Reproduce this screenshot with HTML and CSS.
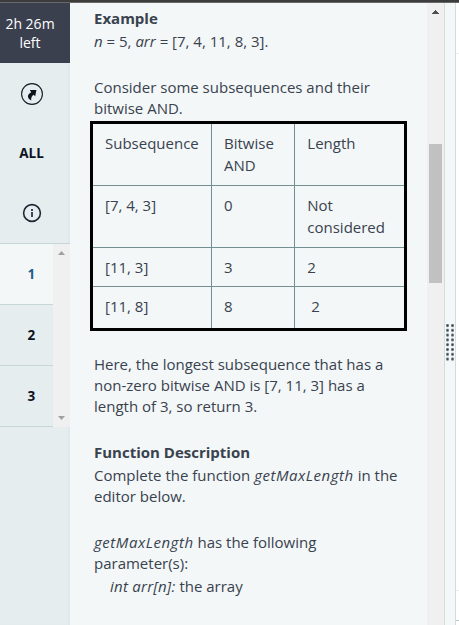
FILE: index.html
```html
<!DOCTYPE html>
<html lang="en">
<head>
<meta charset="utf-8">
<title>Question</title>
<link rel="stylesheet" href="styles.css">
</head>
<body>
<div class="topbar"></div>
<div class="app">
  <nav class="sidebar">
    <div class="timer"><span>2h 26m</span><span>left</span></div>
    <div class="tools">
      <div class="tool share">
        <svg width="24" height="24" viewBox="0 0 24 24"><circle cx="12" cy="12" r="10.4" fill="none" stroke="#151b27" stroke-width="1.1"/><path d="M9.8 8H16.4L15.2 14.2L13.6 12.8C11.8 14 11 15.6 11.2 18.4C7 16.4 6.8 12.4 11.2 10.2Z" fill="#0e141e"/></svg>
      </div>
      <div class="tool all">ALL</div>
      <div class="tool">
        <svg width="20" height="20" viewBox="0 0 20 20"><circle cx="10" cy="10" r="8.4" fill="none" stroke="#202633" stroke-width="1.6"/><path d="M9 6h2v2H9zM9 9h2v5H9z" fill="#414855"/></svg>
      </div>
    </div>
    <div class="questions">
      <div class="list">
        <div class="item active">1</div>
        <div class="item">2</div>
        <div class="item">3</div>
      </div>
      <div class="mini-scroll">
        <svg width="7" height="4" viewBox="0 0 7 4"><path d="M3.5 0L7 4H0z" fill="#a0a0a0"/></svg>
        <svg width="7" height="4" viewBox="0 0 7 4"><path d="M3.5 4L7 0H0z" fill="#a0a0a0"/></svg>
      </div>
    </div>
  </nav>
  <main class="content">
    <h2>Example</h2>
    <p class="gap"><i>n</i> = 5, <i>arr</i> = [7, 4, 11, 8, 3].</p>
    <p>Consider some subsequences and their<br>bitwise AND.</p>
    <div class="table">
      <div>Subsequence</div><div>Bitwise<br>AND</div><div>Length</div>
      <div>[7, 4, 3]</div><div>0</div><div>Not<br>considered</div>
      <div>[11, 3]</div><div>3</div><div>2</div>
      <div>[11, 8]</div><div>8</div><div>&nbsp;2</div>
    </div>
    <p class="gap">Here, the longest subsequence that has a<br>non-zero bitwise AND is [7, 11, 3] has a<br>length of 3, so return 3.</p>
    <h2>Function Description</h2>
    <p class="gap">Complete the function <i class="fn">getMaxLength</i> in the<br>editor below.</p>
    <p><i class="fn">getMaxLength</i> has the following<br>parameter(s):</p>
    <p class="param"><i>int arr[n]:</i> the array</p>
  </main>
  <div class="scrollbar">
    <svg width="7" height="4" viewBox="0 0 7 4" shape-rendering="crispEdges"><path d="M3 0h1v1h1v1h1v1h1v1H0V3h1V2h1V1h1z" fill="#505050"/></svg>
    <div class="thumb"></div>
  </div>
  <div class="splitter"><div class="grip"></div></div>
  <div class="editor"><div class="editor-head"></div><div class="editor-body"></div><div class="editor-foot"></div></div>
</div>
</body>
</html>
```
FILE: styles.css
```css
* { box-sizing: border-box; }
body {
  margin: 0;
  height: 625px;
  overflow: hidden;
  font-family: "Open Sans", sans-serif;
  font-size: 15px;
  line-height: 21px;
  color: #39424e;
  background: #f3f7f8;
}
.topbar { height: 3px; background: #3c3c3c; border-bottom: 1px solid #686868; }
.app { display: flex; height: 622px; }
.sidebar { width: 70px; flex: none; background: #e5edef; box-shadow: inset -2px 0 2px -1px #dce5e7; }
.timer {
  height: 60px;
  padding: 11px 10px 0 0;
  display: flex;
  flex-direction: column;
  align-items: center;
  font-size: 14px;
  line-height: 19px;
  color: #fff;
  background: #3b404e;
}
.tools { height: 181px; padding-right: 6px; border-bottom: 1px solid #c7d6d9; }
.tool { height: 60px; display: flex; align-items: center; justify-content: center; }
.share { padding-top: 2px; }
.all { font-size: 13.5px; font-weight: 700; color: #0e141e; padding-right: 1px; }
.questions { display: flex; height: 183px; }
.list { width: 53px; }
.item {
  height: 61px;
  padding: 20px 0 0 27.5px;
  font-size: 13.5px;
  font-weight: 700;
  color: #0e141e;
  border-bottom: 1px solid #c7d6d9;
}
.active { background: #f3f7f8; color: #1f5f8c; }
.mini-scroll {
  width: 17px;
  padding: 7px 0;
  display: flex;
  flex-direction: column;
  justify-content: space-between;
  align-items: center;
  background: #f0f0f0;
}
.content { width: 357px; flex: none; padding: 5px 0 0 24px; white-space: nowrap; }
h2 { margin: 0 0 2px; font-size: 15px; line-height: 21px; font-weight: 700; }
p { margin: 0; }
.gap { margin-bottom: 25px; }
.fn { letter-spacing: 0.54px; }
.param { margin-top: 2px; padding-left: 16px; }
.param i { letter-spacing: 0.25px; }
.table {
  display: grid;
  grid-template-columns: 119px 83px 109px;
  grid-template-rows: 62px 62px 39px 41px;
  width: 317px;
  margin: 2px 0 23px -4px;
  border: 3px solid #000;
  line-height: 22px;
}
.table div { padding: 8px 0 0 12px; border-right: 1px solid #738f93; border-bottom: 1px solid #738f93; }
.table div:nth-child(3n) { border-right: 0; padding-left: 12.3px; }
.table div:nth-child(n+10) { border-bottom: 0; }
.scrollbar { width: 17px; flex: none; padding-top: 7px; display: flex; flex-direction: column; align-items: center; background: #f0f0f0; }
.thumb { width: 13px; height: 139px; margin-top: 130px; background: #c1c1c1; }
.splitter {
  width: 12px;
  flex: none;
  padding: 321px 0 0 1px;
  border-left: 1px solid #d2dfdf;
  border-right: 1px solid #d2dcd9;
}
.grip {
  width: 9px;
  height: 37px;
  background: radial-gradient(circle at 1.5px 1.5px, #39424e 0.7px, #a3acb4 1.5px, transparent 2px) 0 0 / 5px 4.8px;
}
.editor { flex: 1; background: #fff; display: flex; flex-direction: column; }
.editor-head { height: 51px; border-bottom: 1px solid #e7eeec; }
.editor-body { height: 537px; border-bottom: 1px solid #e7eeec; }
.editor-foot { height: 30px; border-bottom: 1px solid #b8c8ca; }
```
